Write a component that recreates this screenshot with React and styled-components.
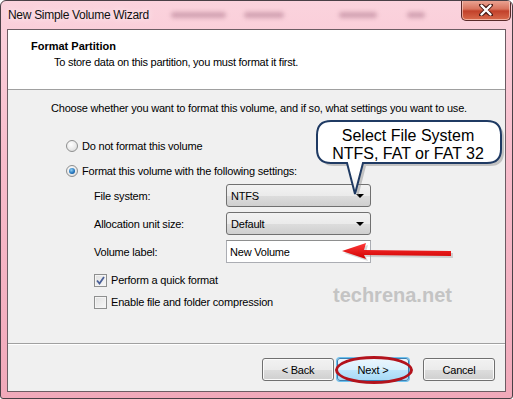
import React from 'react';
import styled, { createGlobalStyle } from 'styled-components';

const GlobalStyle = createGlobalStyle`
  html, body {
    margin: 0;
    padding: 0;
    background: #ffffff;
  }
  * {
    box-sizing: border-box;
  }
`;

const Window = styled.div`
  position: relative;
  width: 513px;
  height: 399px;
  border: 1px solid #4a4046;
  border-radius: 6px 6px 3px 3px;
  background: linear-gradient(180deg, #fbd3dd 0%, #f7bccb 40%, #f1a9ba 100%);
  display: flex;
  flex-direction: column;
  padding: 0 6px 6px 6px;
  font-family: "Liberation Sans", Arial, sans-serif;
  font-size: 11px;
  letter-spacing: -0.2px;
  color: #000;
  overflow: hidden;
`;

const TitleBar = styled.div`
  height: 28px;
  display: flex;
  align-items: center;
  padding-left: 1px;
  position: relative;
`;

const TitleText = styled.span`
  font-family: "Liberation Sans", Arial, sans-serif;
  font-size: 12px;
  letter-spacing: -0.3px;
  color: #101010;
  text-shadow: 0 0 6px rgba(255, 255, 255, 0.9);
  margin-right: 22px;
`;

const BlurText = styled.span`
  width: ${p => p.$w}px;
  margin-left: ${p => p.$gap}px;
  height: 6px;
  border-radius: 3px;
  background: rgba(150, 90, 115, 0.4);
  filter: blur(2px);
`;

const CloseButton = styled.div`
  position: absolute;
  top: -1px;
  right: -5px;
  width: 50px;
  height: 21px;
  border: 1px solid #5a2a2a;
  border-top: none;
  border-radius: 0 0 5px 5px;
  background: linear-gradient(180deg, #eca898 0%, #d8735d 45%, #c2412a 55%, #d86a4c 100%);
  box-shadow: inset 0 0 0 1px rgba(255, 220, 210, 0.6);
  display: flex;
  align-items: center;
  justify-content: center;
`;

const Client = styled.div`
  flex: 1;
  border: 1px solid #6c5c63;
  background: #f0f0f0;
  display: flex;
  flex-direction: column;
`;

const Header = styled.div`
  height: 60px;
  background: #ffffff;
  border-bottom: 1px solid #a0a0a0;
  padding: 9px 0 0 23px;
`;

const HeaderTitle = styled.div`
  font-weight: bold;
  letter-spacing: 0;
  line-height: 14px;
`;

const HeaderSub = styled.div`
  margin: 2px 0 0 23px;
  letter-spacing: -0.25px;
  line-height: 14px;
`;

const Body = styled.div`
  position: relative;
  flex: 1;
  padding: 10px 0 0 0;
  border-bottom: 1px solid #a0a0a0;
  box-shadow: 0 1px 0 #ffffff;
`;

const Intro = styled.div`
  margin-left: 43px;
  line-height: 16px;
`;

const OptionRow = styled.label`
  display: flex;
  align-items: center;
  gap: 4px;
  height: 16px;
  margin-left: ${p => p.$indent}px;
  margin-top: ${p => p.$top}px;
`;

const Radio = styled.span`
  width: 12px;
  height: 12px;
  border-radius: 50%;
  border: 1px solid #8e8f8f;
  background: radial-gradient(circle at 40% 35%, #ffffff 0%, #e8e8e8 60%, #d0d0d0 100%);
  display: flex;
  align-items: center;
  justify-content: center;

  &::after {
    content: '';
    display: ${p => (p.$checked ? 'block' : 'none')};
    width: 6px;
    height: 6px;
    border-radius: 50%;
    background: radial-gradient(circle at 40% 35%, #8fd0f5 0%, #1e6fb8 60%, #0b3f7a 100%);
  }
`;

const Checkbox = styled.span`
  width: 13px;
  height: 13px;
  border: 1px solid #8e8f8f;
  background: linear-gradient(135deg, #e0e0e0 0%, #f8f8f8 100%);
  box-shadow: inset 0 0 0 1px #f4f4f4;
  display: flex;
  align-items: center;
  justify-content: center;
`;

const Settings = styled.div`
  display: grid;
  grid-template-columns: 132px 145px;
  grid-auto-rows: 23px;
  row-gap: 5px;
  margin: 5px 0 0 86px;
  align-items: center;
`;

const Combo = styled.div`
  height: 23px;
  border: 1px solid #707070;
  border-radius: 3px;
  background: linear-gradient(180deg, #f2f2f2 0%, #ebebeb 50%, #dddddd 51%, #cfcfcf 100%);
  display: flex;
  align-items: center;
  justify-content: space-between;
  padding: 0 6px 0 4px;
`;

const Arrow = styled.span`
  width: 0;
  height: 0;
  border-left: 4px solid transparent;
  border-right: 4px solid transparent;
  border-top: 4px solid #000;
`;

const TextInput = styled.div`
  height: 23px;
  border: 1px solid #abadb3;
  border-top-color: #8e8f8f;
  background: #ffffff;
  display: flex;
  align-items: center;
  padding-left: 3px;
`;

const Footer = styled.div`
  height: 47px;
  display: flex;
  justify-content: flex-end;
  align-items: flex-start;
  padding: 14px 10px 0 0;
`;

const Button = styled.div`
  position: relative;
  width: 72px;
  height: 23px;
  margin-left: ${p => p.$gap}px;
  border: 1px solid ${p => (p.$primary ? '#3c7fb1' : '#707070')};
  border-radius: 3px;
  background: ${p =>
    p.$primary
      ? 'linear-gradient(180deg, #eaf6fd 0%, #d9f0fc 50%, #bee6fd 51%, #a7d9f5 100%)'
      : 'linear-gradient(180deg, #f2f2f2 0%, #ebebeb 50%, #dddddd 51%, #cfcfcf 100%)'};
  box-shadow: ${p => (p.$primary ? '0 0 0 1px #6dc1ee' : 'inset 0 0 0 1px #fbfbfb')};
  display: flex;
  align-items: center;
  justify-content: center;
`;

const Ellipse = styled.span`
  position: absolute;
  left: -3px;
  top: -3px;
  width: 78px;
  height: 28px;
  border: 3px solid #b3131c;
  border-radius: 50%;
  pointer-events: none;
`;

const Watermark = styled.div`
  position: absolute;
  left: 325px;
  top: 194px;
  font-family: "Liberation Sans", Arial, sans-serif;
  font-weight: bold;
  font-size: 20px;
  letter-spacing: 0;
  color: #c4c4c4;
`;

const Overlay = styled.svg`
  position: absolute;
  left: 0;
  top: 0;
  pointer-events: none;
`;

const CalloutText = styled.text`
  font-family: "Liberation Sans", Arial, sans-serif;
  font-size: 16px;
  letter-spacing: 0;
  fill: #000;
`;

export default function App() {
  return (
    <>
      <GlobalStyle />
      <Window>
        <TitleBar>
          <TitleText>New Simple Volume Wizard</TitleText>
          <BlurText $w={55} $gap={0} />
          <BlurText $w={40} $gap={18} />
          <BlurText $w={38} $gap={55} />
          <BlurText $w={18} $gap={30} />
          <CloseButton>
            <svg width="14" height="12" viewBox="0 0 14 12">
              <path
                d="M2 1 L7 5 L12 1 M2 11 L7 7 L12 11 M2 1 L12 11 M12 1 L2 11"
                stroke="#4a1a14"
                strokeWidth="4"
                strokeLinecap="round"
                fill="none"
              />
              <path
                d="M2.5 1.5 L11.5 10.5 M11.5 1.5 L2.5 10.5"
                stroke="#ffffff"
                strokeWidth="2.4"
                strokeLinecap="round"
                fill="none"
              />
            </svg>
          </CloseButton>
        </TitleBar>

        <Client>
          <Header>
            <HeaderTitle>Format Partition</HeaderTitle>
            <HeaderSub>To store data on this partition, you must format it first.</HeaderSub>
          </Header>

          <Body>
            <Intro>Choose whether you want to format this volume, and if so, what settings you want to use.</Intro>

            <OptionRow $indent={58} $top={22}>
              <Radio />
              Do not format this volume
            </OptionRow>
            <OptionRow $indent={58} $top={9}>
              <Radio $checked />
              Format this volume with the following settings:
            </OptionRow>

            <Settings>
              <span>File system:</span>
              <Combo>
                NTFS
                <Arrow />
              </Combo>
              <span>Allocation unit size:</span>
              <Combo>
                Default
                <Arrow />
              </Combo>
              <span>Volume label:</span>
              <TextInput>New Volume</TextInput>
            </Settings>

            <OptionRow $indent={86} $top={9}>
              <Checkbox>
                <svg width="9" height="9" viewBox="0 0 9 9">
                  <path d="M1 4.5 L3.5 7.5 L8 1" stroke="#4a5f97" strokeWidth="1.8" fill="none" />
                </svg>
              </Checkbox>
              Perform a quick format
            </OptionRow>
            <OptionRow $indent={86} $top={6}>
              <Checkbox />
              Enable file and folder compression
            </OptionRow>

            <Watermark>techrena.net</Watermark>
          </Body>

          <Footer>
            <Button>&lt; Back</Button>
            <Button $primary $gap={3}>
              Next &gt;
              <Ellipse />
            </Button>
            <Button $gap={14}>Cancel</Button>
          </Footer>
        </Client>

        <Overlay width="513" height="399" viewBox="0 0 513 399">
          <defs>
            <linearGradient id="bubbleFill" x1="0" y1="0" x2="0" y2="1">
              <stop offset="0" stopColor="#ffffff" />
              <stop offset="0.7" stopColor="#ffffff" />
              <stop offset="1" stopColor="#e6e6e6" />
            </linearGradient>
            <linearGradient id="arrowFill" x1="0" y1="0" x2="0" y2="1">
              <stop offset="0" stopColor="#ff3a3a" />
              <stop offset="1" stopColor="#d00000" />
            </linearGradient>
          </defs>
          <path
            d="M330 120 H486 Q500 120 500 134 V148 Q500 162 486 162 H362 L354 193 L346 162 H330 Q316 162 316 148 V134 Q316 120 330 120 Z"
            fill="#8a8a8a"
            opacity="0.45"
            transform="translate(3 3)"
          />
          <path
            d="M330 120 H486 Q500 120 500 134 V148 Q500 162 486 162 H362 L354 193 L346 162 H330 Q316 162 316 148 V134 Q316 120 330 120 Z"
            fill="url(#bubbleFill)"
            stroke="#1f3a63"
            strokeWidth="2"
          />
          <CalloutText x="407" y="140" textAnchor="middle">Select File System</CalloutText>
          <CalloutText x="407" y="158" textAnchor="middle">NTFS, FAT or FAT 32</CalloutText>

          <path d="M341 250 L365 242 L363 249 L450 250 L450 255 L363 254 L365 258 Z" fill="#9a9a9a" opacity="0.4" transform="translate(2 2)" />
          <path d="M341 250 L365 242 L363 249 L450 250 L450 255 L363 254 L365 258 Z" fill="url(#arrowFill)" />
        </Overlay>
      </Window>
    </>
  );
}
